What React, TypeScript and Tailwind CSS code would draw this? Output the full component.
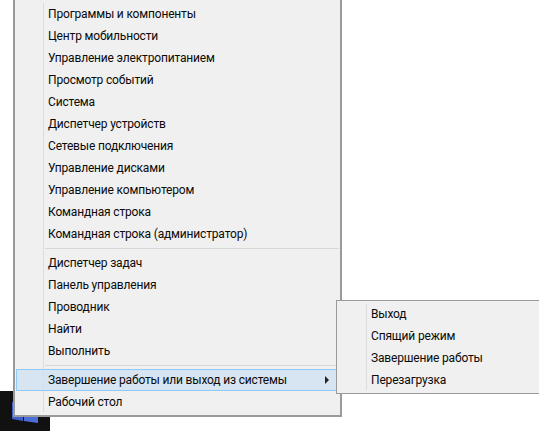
const group1 = ["Программы и компоненты","Центр мобильности","Управление электропитанием","Просмотр событий","Система","Диспетчер устройств","Сетевые подключения","Управление дисками","Управление компьютером","Командная строка","Командная строка (администратор)"];
const group2 = ["Диспетчер задач","Панель управления","Проводник","Найти","Выполнить"];
const sub = ["Выход","Спящий режим","Завершение работы","Перезагрузка"];

function Row({ label }: { label: string }) {
  return <div className="h-[22px] pl-[32px] flex items-center leading-none whitespace-nowrap">{label}</div>;
}
function Sep() {
  return <div className="h-[7px] ml-[29px] flex items-center"><div className="h-px w-full bg-[#d7d7d7]" /></div>;
}

export default function App() {
  return (
    <div className="relative w-[539px] h-[431px] bg-white overflow-hidden text-[12px] tracking-[-0.17px] text-[#0a0a0a]" style={{ fontFamily: 'Roboto, sans-serif' }}>
      <div className="absolute left-0 top-[391px] w-[50px] h-[40px] bg-[#111111]">
        <svg width="50" height="40" className="absolute left-0 top-0">
          <polygon points="12,11 23,9 23,30 12,28" fill="#3f60c8" />
          <polygon points="24,9 38,7 38,32 24,30" fill="#4a6fd8" />
        </svg>
      </div>
      <div className="absolute left-[13px] top-0 w-[329px] h-[417px] border-t-0 border-[#9a9a9a] border-l-2 border-r-2 border-b-2 bg-[#f0f0f0] pt-[3px] pl-px pr-px flex flex-col">
        <div className="absolute left-[28px] top-[3px] bottom-[3px] w-px bg-[#dcdcdc]" />
        {group1.map((t) => <Row key={t} label={t} />)}
        <Sep />
        {group2.map((t) => <Row key={t} label={t} />)}
        <Sep />
        <div className="relative h-[22px] pl-[31px] flex items-center border border-[#90c8f6] bg-[#d1e2f2]/80 whitespace-nowrap leading-none">
          Завершение работы или выход из системы
          <svg width="5" height="8" className="absolute right-[8px] top-[6px]"><polygon points="0,0 4,4 0,8" fill="#222" /></svg>
        </div>
        <Row label="Рабочий стол" />
      </div>
      <div className="absolute left-[336px] top-[300px] w-[204px] h-[94px] border border-[#9a9a9a] bg-[#f0f0f0] pt-[2px] flex flex-col">
        <div className="absolute left-[29px] top-[3px] bottom-[3px] w-px bg-[#dcdcdc]" />
        {sub.map((t) => <div key={t} className="h-[22px] pl-[34px] flex items-center leading-none whitespace-nowrap">{t}</div>)}
      </div>
    </div>
  );
}
